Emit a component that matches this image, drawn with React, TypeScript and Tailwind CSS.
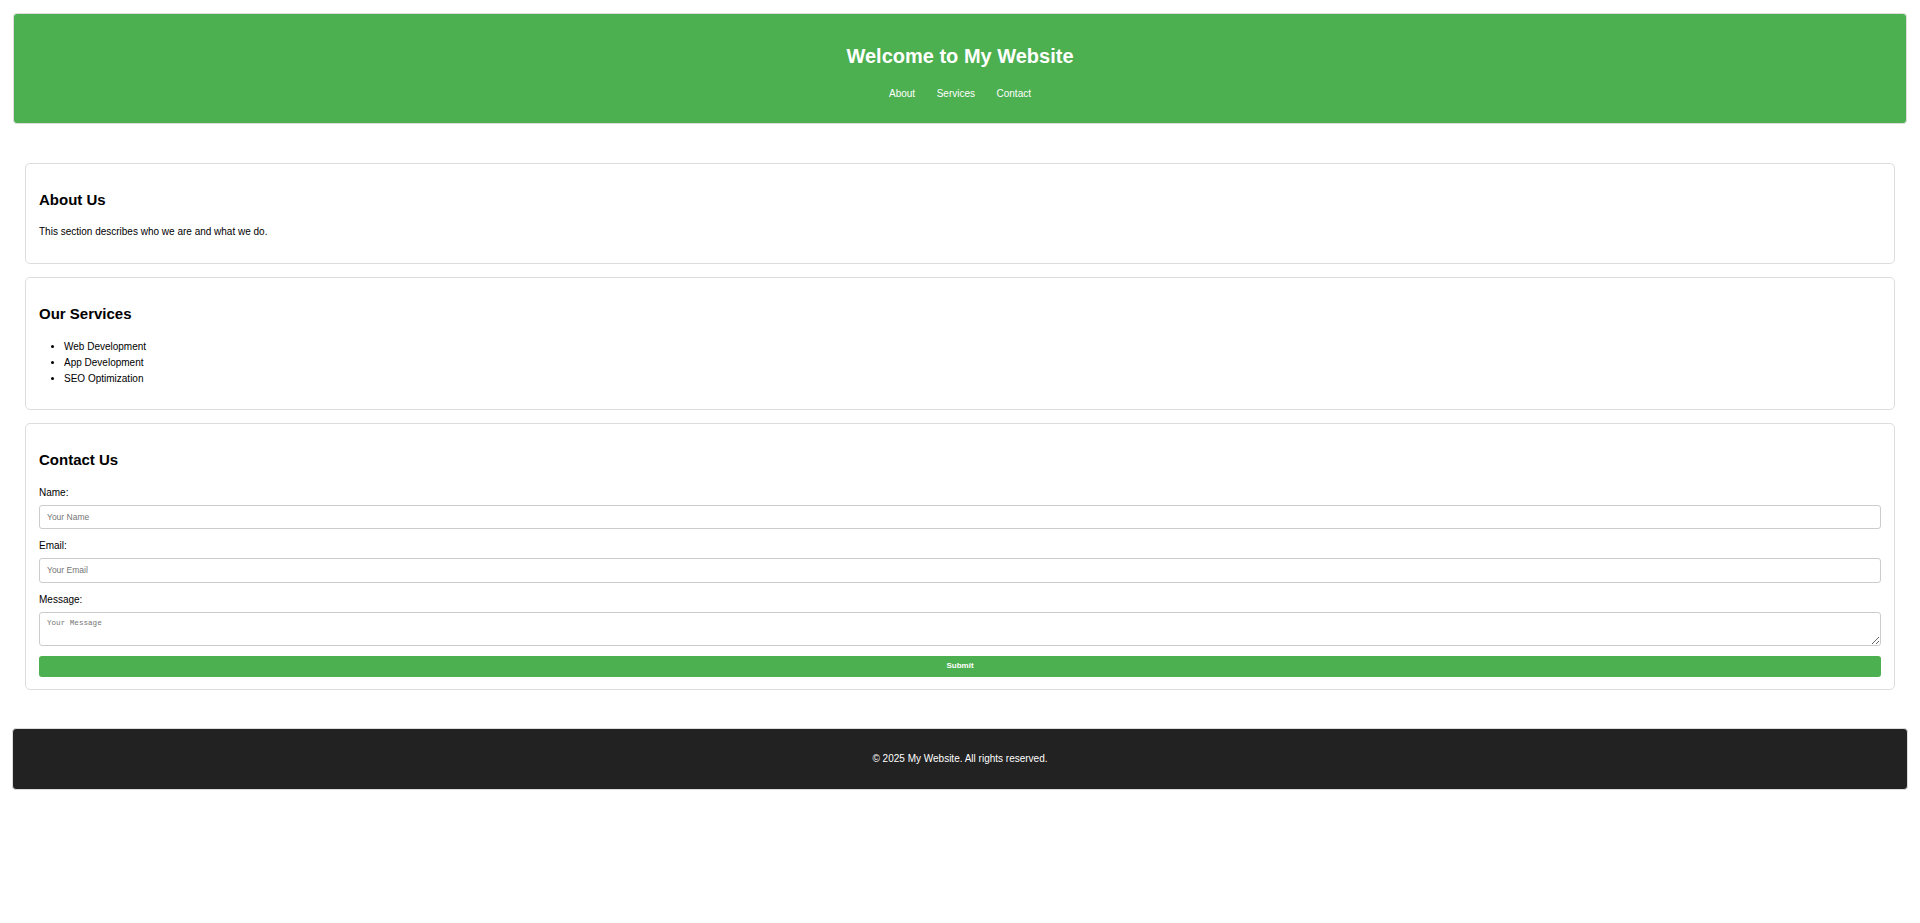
import React from "react";

const services = ["Web Development", "App Development", "SEO Optimization"];

function Field(props: { label: string; placeholder: string; type?: string; first?: boolean }) {
  return (
    <div className={props.first ? "mt-[17.5px]" : "mt-[11px]"}>
      <label className="block text-[10px] leading-[12px]">{props.label}</label>
      <input
        type={props.type || "text"}
        placeholder={props.placeholder}
        className="mt-[6px] block h-[24.5px] w-full rounded-[3px] border border-[#ccc] bg-white px-[7px] font-['Liberation_Sans',Arial,sans-serif] text-[8.5px] outline-none placeholder:text-[#757575]"
      />
    </div>
  );
}

export default function App() {
  return (
    <div className="min-h-screen bg-white pt-[13px] font-['Liberation_Sans',Arial,sans-serif] text-black">
      {/* Header */}
      <header className="mx-[13px] rounded-[4px] border border-[#ddd] bg-[#4caf50] pt-[31px] pb-[23px] text-center text-white">
        <h1 className="text-[20px] font-bold leading-[23px]">Welcome to My Website</h1>
        <nav className="mt-[19.5px] flex justify-center gap-[21.5px] text-[10px] leading-[12px]">
          <a href="#about">About</a>
          <a href="#services">Services</a>
          <a href="#contact">Contact</a>
        </nav>
      </header>

      <main className="mx-[25px] mt-[39px] flex flex-col gap-[13px]">
        {/* About */}
        <section id="about" className="rounded-[5px] border border-[#ddd] px-[13px] pt-[27.5px] pb-[24.5px]">
          <h2 className="text-[15px] font-bold leading-[18px]">About Us</h2>
          <p className="mt-[17px] text-[10px] leading-[12px]">
            This section describes who we are and what we do.
          </p>
        </section>

        {/* Services */}
        <section id="services" className="rounded-[5px] border border-[#ddd] px-[13px] pt-[27.5px] pb-[22.5px]">
          <h2 className="text-[15px] font-bold leading-[18px]">Our Services</h2>
          <ul className="mt-[15.5px] list-disc pl-[25px] text-[10px] leading-[16px]">
            {services.map((s) => (
              <li key={s}>{s}</li>
            ))}
          </ul>
        </section>

        {/* Contact */}
        <section id="contact" className="rounded-[5px] border border-[#ddd] px-[13px] pt-[27px] pb-[11.5px]">
          <h2 className="text-[15px] font-bold leading-[18px]">Contact Us</h2>
          <form onSubmit={(e) => e.preventDefault()}>
            <Field label="Name:" placeholder="Your Name" first />
            <Field label="Email:" placeholder="Your Email" type="email" />
            <div className="mt-[11px]">
              <label className="block text-[10px] leading-[12px]">Message:</label>
              <textarea
                placeholder="Your Message"
                className="mt-[6px] block h-[34.5px] w-full rounded-[3px] border border-[#ccc] bg-white px-[7px] pt-[5px] font-['Liberation_Mono',monospace] text-[7.6px] outline-none placeholder:text-[#757575]"
              />
            </div>
            <button
              type="submit"
              className="mt-[9.5px] block h-[21.5px] w-full rounded-[3px] bg-[#4caf50] text-[8px] font-bold text-white"
            >
              Submit
            </button>
          </form>
        </section>
      </main>

      {/* Footer */}
      <footer className="mx-[12px] mt-[38px] rounded-[4px] border border-[#ddd] bg-[#222] pt-[24px] pb-[24px] text-center text-[10px] leading-[12px] text-white">
        © 2025 My Website. All rights reserved.
      </footer>
    </div>
  );
}
